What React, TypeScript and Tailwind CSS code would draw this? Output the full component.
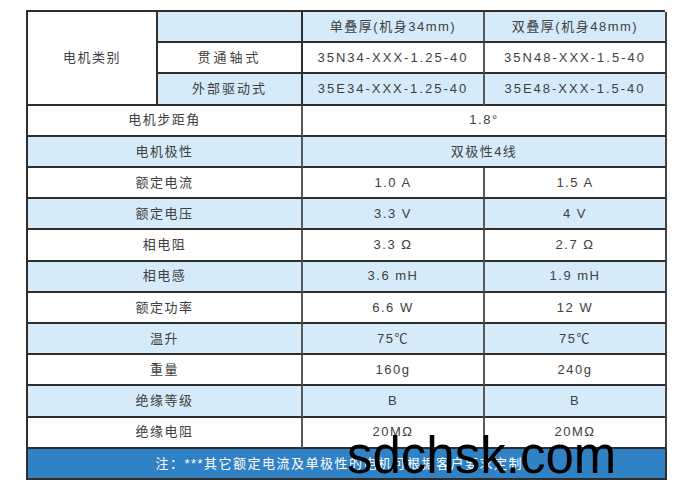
import React from "react";

const base =
  "flex items-center justify-center border-r-2 border-b-2 border-b-[#2e2e2e] text-[13px] text-[#404040] tracking-[1.5px] whitespace-nowrap";
const blue = "bg-[#d6ebf9]";
const white = "bg-white";

type Row = { label: string; vals: string[]; bg: string };

const rows: Row[] = [
  { label: "电机步距角", vals: ["1.8°"], bg: white },
  { label: "电机极性", vals: ["双极性4线"], bg: blue },
  { label: "额定电流", vals: ["1.0 A", "1.5 A"], bg: white },
  { label: "额定电压", vals: ["3.3 V", "4 V"], bg: blue },
  { label: "相电阻", vals: ["3.3 Ω", "2.7 Ω"], bg: white },
  { label: "相电感", vals: ["3.6 mH", "1.9 mH"], bg: blue },
  { label: "额定功率", vals: ["6.6 W", "12 W"], bg: white },
  { label: "温升", vals: ["75℃", "75℃"], bg: blue },
  { label: "重量", vals: ["160g", "240g"], bg: white },
  { label: "绝缘等级", vals: ["B", "B"], bg: blue },
  { label: "绝缘电阻", vals: ["20MΩ", "20MΩ"], bg: white },
];

export default function App() {
  return (
    <div className="relative w-[693px] h-[501px] bg-white pl-[26px] pt-[10px] font-['Liberation_Sans','Noto_Sans_CJK_SC',sans-serif]">
      <div className="grid w-[639px] h-[470px] border-l-2 border-t-2 border-[#2e2e2e] grid-cols-[130px_145px_182px_182px] grid-rows-[repeat(15,1fr)]">
        <div className={`${base} ${white} row-span-3 border-r-[#2e2e2e] tracking-[0px]`}>电机类别</div>
        <div className={`${base} ${blue} border-r-[#2e2e2e]`}></div>
        <div className={`${base} ${blue} border-r-[#5a5a5a]`}>单叠厚(机身34mm)</div>
        <div className={`${base} ${blue} border-r-[#444]`}>双叠厚(机身48mm)</div>

        <div className={`${base} ${white} border-r-[#2e2e2e] tracking-[3px]`}>贯通轴式</div>
        <div className={`${base} ${white} border-r-[#5a5a5a] tracking-[2px]`}>35N34-XXX-1.25-40</div>
        <div className={`${base} ${white} border-r-[#444] tracking-[2px]`}>35N48-XXX-1.5-40</div>

        <div className={`${base} ${blue} border-r-[#2e2e2e] tracking-[2px]`}>外部驱动式</div>
        <div className={`${base} ${blue} border-r-[#5a5a5a] tracking-[2px]`}>35E34-XXX-1.25-40</div>
        <div className={`${base} ${blue} border-r-[#444] tracking-[2px]`}>35E48-XXX-1.5-40</div>

        {rows.map((r) => (
          <React.Fragment key={r.label}>
            <div className={`${base} ${r.bg} col-span-2 border-r-[#5a5a5a]`}>{r.label}</div>
            {r.vals.length === 1 ? (
              <div className={`${base} ${r.bg} col-span-2 border-r-[#444]`}>{r.vals[0]}</div>
            ) : (
              <>
                <div className={`${base} ${r.bg} border-r-[#5a5a5a]`}>{r.vals[0]}</div>
                <div className={`${base} ${r.bg} border-r-[#444]`}>{r.vals[1]}</div>
              </>
            )}
          </React.Fragment>
        ))}

        <div className="col-span-4 flex items-center justify-center bg-[#3181c5] border-r-2 border-b-2 border-[#2e2e2e] text-[13px] text-white tracking-[1.5px] whitespace-nowrap">
          注：***其它额定电流及单极性的电机可根据客户要求定制。
        </div>
      </div>
      <div className="absolute left-[347px] top-[430px] text-[51px] leading-none text-black font-['Liberation_Sans',sans-serif] tracking-[0px]">
        sdchsk.com
      </div>
    </div>
  );
}
